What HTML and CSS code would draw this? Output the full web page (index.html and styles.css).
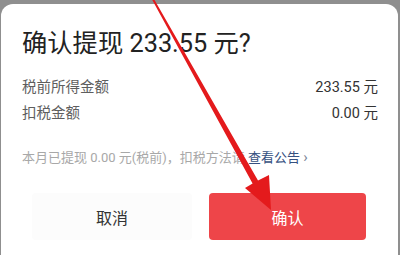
FILE: index.html
```html
<!DOCTYPE html>
<html lang="zh">
<head>
<meta charset="utf-8">
<link rel="stylesheet" href="styles.css">
</head>
<body>
<div class="card">
  <h1 class="title">确认提现 233.55 元?</h1>
  <div class="rows">
    <div class="row"><span class="label">税前所得金额</span><span class="value">233.55 元</span></div>
    <div class="row"><span class="label">扣税金额</span><span class="value">0.00 元</span></div>
  </div>
  <p class="note">本月已提现 0.00 元(税前)，扣税方法请 <span class="link">查看公告</span> <span class="chev">&#x203A;</span></p>
  <div class="actions">
    <div class="btn cancel">取消</div>
    <div class="btn ok">确认</div>
  </div>
</div>
<svg class="arrow" width="400" height="255" viewBox="0 0 400 255">
  <polygon points="151.2,-2 153.4,-2 258,180.4 269,175 271,210 245,188 252.6,183.6" fill="#e41a1c"/>
</svg>
</body>
</html>
```
FILE: styles.css
```css
html, body {
  margin: 0;
  padding: 0;
}
body {
  width: 400px;
  height: 255px;
  overflow: hidden;
  background: #8f8f8f;
  font-family: Roboto, "Noto Sans CJK SC", sans-serif;
  position: relative;
}
.card {
  margin: 4px 2px 0 1px;
  height: 251px;
  background: #ffffff;
  border-radius: 12px 12px 0 0;
  padding: 24px 20px 0 21px;
  box-sizing: border-box;
}
.title {
  margin: 0;
  font-size: 25.3px;
  line-height: 32px;
  font-weight: 400;
  color: #222222;
}
.rows {
  margin-top: 15px;
}
.row {
  display: flex;
  justify-content: space-between;
  font-size: 14.5px;
  line-height: 26px;
}
.label {
  color: #5e5e5e;
}
.value {
  color: #333333;
}
.note {
  margin: 21px 0 0 0;
  font-size: 13px;
  line-height: 18px;
  color: #a8a8a8;
}
.link {
  color: #355080;
}
.chev {
  color: #7a8598;
  font-size: 15px;
}
.actions {
  margin: 26px 0 0 10px;
  display: grid;
  grid-template-columns: 160px 157px;
  column-gap: 17px;
}
.btn {
  height: 47px;
  display: flex;
  align-items: center;
  justify-content: center;
  font-size: 16px;
  border-radius: 4px;
}
.cancel {
  background: #fcfcfc;
  color: #333333;
}
.ok {
  background: #ee4549;
  color: #ffffff;
}
.arrow {
  position: absolute;
  left: 0;
  top: 0;
  pointer-events: none;
}
```
